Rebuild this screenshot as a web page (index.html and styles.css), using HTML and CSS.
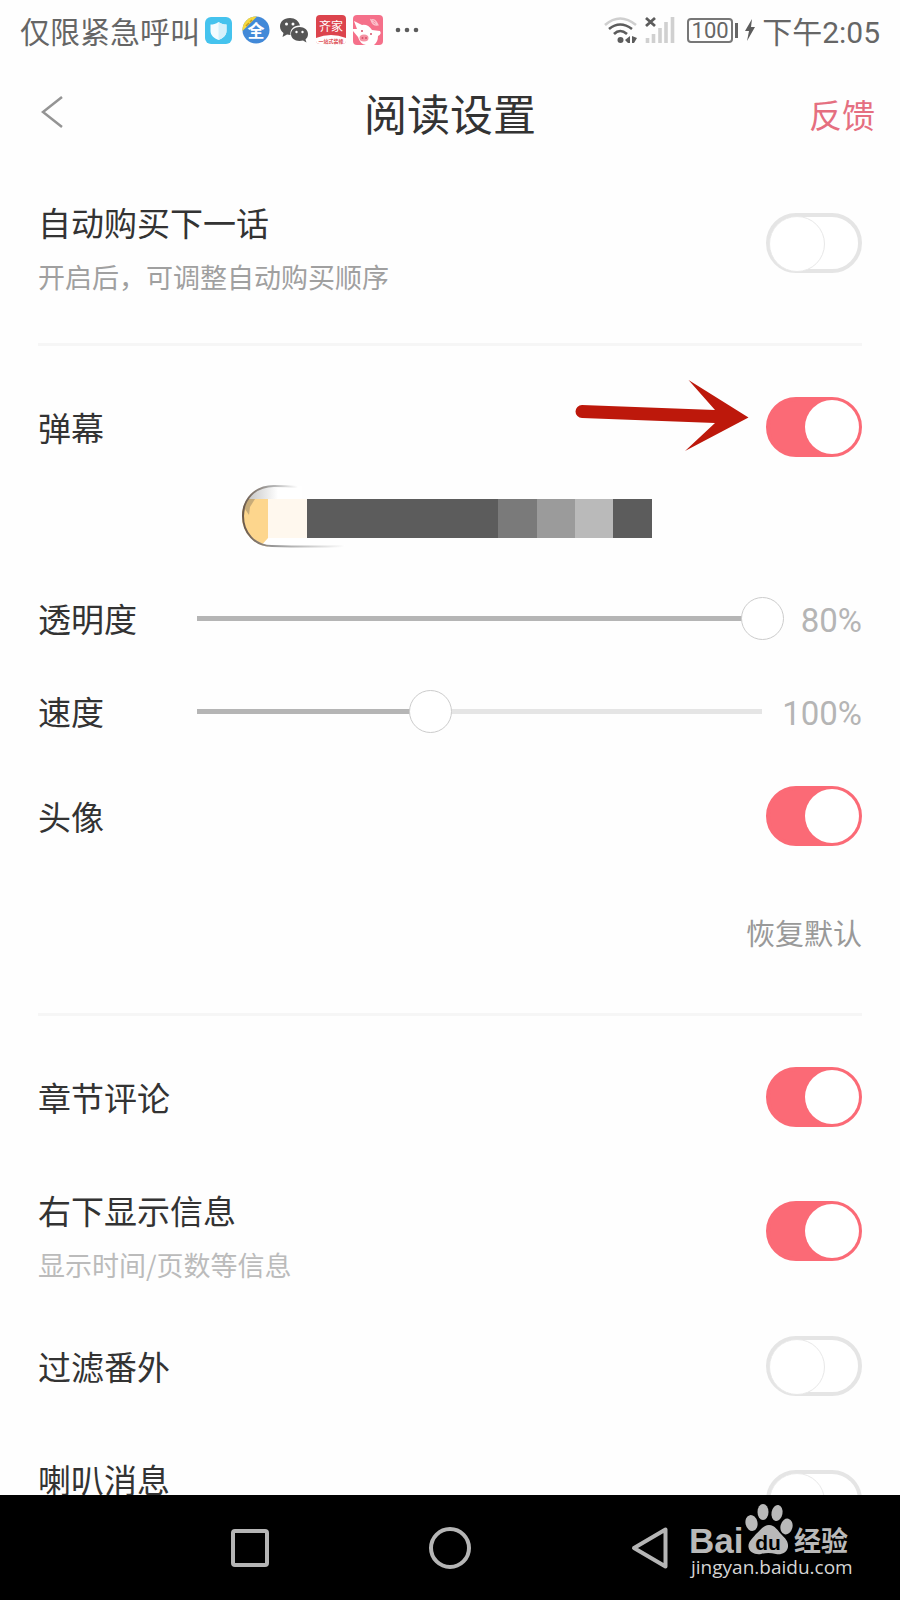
FILE: index.html
```html
<!DOCTYPE html>
<html lang="zh-CN">
<head>
<meta charset="utf-8">
<meta name="viewport" content="width=device-width, initial-scale=1">
<title>阅读设置</title>
<link rel="stylesheet" href="styles.css">
</head>
<body>
<div class="status">
  <div class="status-left">
    <span>仅限紧急呼叫</span>
    <svg class="app-icon" viewBox="0 0 37 37" aria-hidden="true">
      <rect x="5" y="5" width="27" height="27" rx="6" fill="#45c3ee"/>
      <path d="M18.500 10 C16 12 13 12.500 10.500 12.500 V19 C10.500 23.500 14 26 18.500 28 C23 26 26.500 23.500 26.500 19 V12.500 C24 12.500 21 12 18.500 10Z" fill="#f4fcff"/>
      <path d="M18.500 10 C21 12 24 12.500 26.500 12.500 V19 C26.500 23.500 23 26 18.500 28Z" fill="#d5f1fb"/>
    </svg>
    <svg class="app-icon" viewBox="0 0 37 37" aria-hidden="true">
      <circle cx="19" cy="18" r="13.500" fill="#4289d8"/>
      <path d="M5.500 19 A13.500 13.500 0 0 1 20 4.500Z" fill="#f7d83c"/>
      <path d="M9 14 l3 -3 M13 10 l2 -2" stroke="#c09a2a" stroke-width="1.500"/>
      <text class="icon-full" x="19" y="25" text-anchor="middle">全</text>
    </svg>
    <svg class="app-icon" viewBox="0 0 37 37" aria-hidden="true">
      <path d="M16 6 C9.500 6 6 10 6 14.500 C6 17.500 7.500 19.500 9.500 21 L8.500 25 L13 22.500 L16.500 23 C15.500 17 20.500 13 26 13.500 C25 9 21 6 16 6Z" fill="#555"/>
      <path d="M25.500 15 C20.500 15 17 18 17 22 C17 26 20.500 29 25.500 29 L29 28.500 L32.500 30.500 L31.500 27.500 C33 26 34 24.500 34 22 C34 18 30.500 15 25.500 15Z" fill="#555"/>
      <g fill="#fff"><circle cx="12.500" cy="12" r="1.500"/><circle cx="19" cy="12" r="1.500"/><circle cx="22.500" cy="20" r="1.200"/><circle cx="28.500" cy="20" r="1.200"/></g>
    </svg>
    <svg class="app-icon" viewBox="0 0 37 37" aria-hidden="true">
      <rect x="5" y="3" width="30" height="29" rx="4" fill="#dc444d"/>
      <path d="M5 26 Q20 20 35 26 V29 Q35 32 31 32 H9 Q5 32 5 29Z" fill="#fff"/>
      <text class="icon-name" x="20" y="19" text-anchor="middle">齐家</text>
      <text class="icon-tag" x="20" y="31" text-anchor="middle">一站式装修</text>
    </svg>
    <svg class="app-icon" viewBox="0 0 37 37" aria-hidden="true">
      <rect x="5" y="3" width="30" height="30" rx="4" fill="#f5708a"/>
      <path d="M6 9 L14 13 Q20 12 24 18 L32 19 Q34 22 30 24 Q30 30 26 33 H18 Q12 32 10 25 L5 19 V17 L9 17Z" fill="#fff"/>
      <ellipse cx="16" cy="26" rx="4.500" ry="3.500" fill="#f593a4"/>
      <g fill="#d6506a"><circle cx="14.500" cy="26" r="1"/><circle cx="18" cy="26" r="1"/><circle cx="14" cy="19" r="1"/><circle cx="23" cy="22" r="1"/></g>
      <path d="M23 8 Q27 6 30 13 Q25 14 23 8 L30 13" fill="none" stroke="#fbc3cd" stroke-width="1.200"/>
    </svg>
    <svg class="app-icon" viewBox="0 0 37 37" aria-hidden="true">
      <g fill="#5c5c5c"><circle cx="13" cy="18" r="2.300"/><circle cx="22" cy="18" r="2.300"/><circle cx="31" cy="18" r="2.300"/></g>
    </svg>
  </div>
  <div class="status-right">
    <svg class="wifi" viewBox="0 0 34 28" aria-hidden="true">
      <g fill="none" stroke="#5c5c5c" stroke-width="2.600">
        <path d="M1 9 Q16 -4 32 9" stroke="#cfcfcf"/>
        <path d="M5 13 Q16 4 28 13"/>
        <path d="M10 18 Q16 12 23 18"/>
      </g>
      <circle cx="16.500" cy="24" r="3" fill="#5c5c5c"/>
      <path d="M21 24 L26 20 V27 H24Z M28 20 L33 22 L30 27 H28Z" fill="#5c5c5c"/>
    </svg>
    <svg class="signal" viewBox="0 0 30 28" aria-hidden="true">
      <path d="M1 2 L10 10 M10 2 L1 10" stroke="#5c5c5c" stroke-width="2.800"/>
      <path d="M2.500 22 V27 M8.500 18 V27 M15 12 V27 M21 6 V27 M27.500 1 V27" stroke="#d0d0d0" stroke-width="3.600"/>
    </svg>
    <span class="battery">100</span>
    <svg class="bolt" viewBox="0 0 12 24" aria-hidden="true"><path d="M8 1 L1 13 H5 L3 23 L11 9 H7Z" fill="#5c5c5c"/></svg>
    <span class="clock">下午2:05</span>
  </div>
</div>

<header class="header">
  <button class="back" type="button" aria-label="返回">
    <svg viewBox="0 0 22 34" aria-hidden="true"><path d="M21 2 L2 17 L21 32" fill="none" stroke="#949494" stroke-width="2.500"/></svg>
  </button>
  <h1 class="title">阅读设置</h1>
  <a class="feedback" href="#">反馈</a>
</header>

<main class="settings">
  <section class="group group-first">
    <div class="row row-tall">
      <div class="row-text">
        <label class="label" for="auto-buy">自动购买下一话</label>
        <p class="hint">开启后，可调整自动购买顺序</p>
      </div>
      <input class="toggle" type="checkbox" id="auto-buy">
    </div>
  </section>

  <section class="group group-danmu">
    <div class="row">
      <label class="label" for="danmu">弹幕</label>
      <svg class="pointer" viewBox="0 0 180 74" aria-hidden="true">
        <path d="M12 27 L145 32 L118.500 2 L178.500 39.500 L115 73 L145 45 L12 40 A6.500 6.500 0 0 1 12 27Z" fill="#bd180b"/>
      </svg>
      <input class="toggle" type="checkbox" id="danmu" checked>
    </div>
    <svg class="preview" viewBox="0 0 420 63" aria-hidden="true">
      <defs>
        <linearGradient id="rim" x1="0" x2="1"><stop offset="0" stop-color="#6b5a4c"/><stop offset=".3" stop-color="#999"/><stop offset="1" stop-color="#fff"/></linearGradient>
        <linearGradient id="rim-top" x1="0" x2="1"><stop offset="0" stop-color="#6b5a4c"/><stop offset=".5" stop-color="#aaa"/><stop offset="1" stop-color="#fff"/></linearGradient>
        <linearGradient id="shade" x1="0" x2="1"><stop offset="0" stop-color="#bbb"/><stop offset=".6" stop-color="#fff"/></linearGradient>
        <clipPath id="pill"><rect x="2" y="1" width="200" height="61" rx="30"/></clipPath>
      </defs>
      <g clip-path="url(#pill)">
        <rect x="2" y="1" width="60" height="14" fill="url(#shade)"/>
        <path d="M2 14 H28 V62 H18 L2 44Z" fill="#fdd68d"/>
        <path d="M20 62 L28 53 H70 V60Z" fill="#fff"/>
        <path d="M2 14 H15 L10 22 L9 30 L5 24 L3 38Z" fill="#a38d6a" opacity=".6"/>
      </g>
      <path d="M3 31 C3 14 15 1 34 1 Q46 1 58 2" fill="none" stroke="url(#rim-top)" stroke-width="2"/>
      <path d="M3 31 C3 48 15 61 32 61 C50 61.500 75 62 105 61" fill="none" stroke="url(#rim)" stroke-width="2"/>
      <rect x="28" y="14" width="39" height="39" fill="#fff8ee"/>
      <rect x="67" y="14" width="345" height="39" fill="#5c5c5c"/>
      <rect x="258" y="14" width="39" height="39" fill="#7a7a7a"/>
      <rect x="297" y="14" width="38" height="39" fill="#9b9b9b"/>
      <rect x="335" y="14" width="38" height="39" fill="#bababa"/>
    </svg>
    <div class="row row-opacity">
      <label class="label label-slider" for="opacity">透明度</label>
      <input class="slider" type="range" id="opacity" min="0" max="80" value="80" style="--fill: 97%">
      <output class="value" for="opacity">80%</output>
    </div>
    <div class="row row-speed">
      <label class="label label-slider" for="speed">速度</label>
      <input class="slider" type="range" id="speed" min="22" max="222" value="100" style="--fill: 40%">
      <output class="value" for="speed">100%</output>
    </div>
    <div class="row row-avatar">
      <label class="label" for="avatar">头像</label>
      <input class="toggle" type="checkbox" id="avatar" checked>
    </div>
    <button class="reset" type="button">恢复默认</button>
  </section>

  <section class="group group-display">
    <div class="row">
      <label class="label" for="comments">章节评论</label>
      <input class="toggle" type="checkbox" id="comments" checked>
    </div>
    <div class="row row-tall">
      <div class="row-text">
        <label class="label" for="corner">右下显示信息</label>
        <p class="hint hint-light">显示时间/页数等信息</p>
      </div>
      <input class="toggle" type="checkbox" id="corner" checked>
    </div>
    <div class="row row-filter">
      <label class="label" for="extras">过滤番外</label>
      <input class="toggle" type="checkbox" id="extras">
    </div>
    <div class="row row-tall">
      <label class="label" for="horn">喇叭消息</label>
      <input class="toggle" type="checkbox" id="horn">
    </div>
  </section>
</main>

<nav class="navbar">
  <button class="nav-button" type="button" aria-label="最近任务">
    <svg viewBox="0 0 44 44" aria-hidden="true"><rect x="5" y="5" width="34" height="34" rx="2" fill="none" stroke="#b5b5b5" stroke-width="4"/></svg>
  </button>
  <button class="nav-button" type="button" aria-label="主页">
    <svg viewBox="0 0 44 44" aria-hidden="true"><circle cx="22" cy="22" r="19" fill="none" stroke="#b5b5b5" stroke-width="4"/></svg>
  </button>
  <button class="nav-button" type="button" aria-label="返回">
    <svg viewBox="0 0 44 44" aria-hidden="true"><path d="M37.500 3.500 V40.500 L6 22Z" fill="none" stroke="#b5b5b5" stroke-width="4" stroke-linejoin="round"/></svg>
  </button>
  <svg class="brand" viewBox="0 0 170 80" role="img" aria-label="Baidu 经验 jingyan.baidu.com">
    <g fill="#b9b9b9">
      <text class="brand-bai" x="0" y="51">Bai</text>
      <ellipse cx="62.500" cy="21" rx="6" ry="8" transform="rotate(-12 62.500 21)"/>
      <ellipse cx="74" cy="10" rx="5.500" ry="8"/>
      <ellipse cx="88" cy="11" rx="5.500" ry="8" transform="rotate(10 88 11)"/>
      <ellipse cx="97.500" cy="24.500" rx="6" ry="8" transform="rotate(14 97.500 24.500)"/>
      <path d="M80 23 C86 23 89 29 92 32 C97 37 99.500 40 99 45 C98 51 92 53 87 52 Q79 50 72 52 C66 53 60 50 59.500 45 C59 40 63 37 67 32 C71 29 74 23 80 23Z"/>
      <text class="brand-jy" x="105" y="49">经验</text>
    </g>
    <text class="brand-du" x="79" y="48" text-anchor="middle">du</text>
    <text class="brand-url" x="2" y="72">jingyan.baidu.com</text>
  </svg>
</nav>
</body>
</html>
```

FILE: styles.css
```css
* { box-sizing: border-box; }

body {
  margin: 0;
  height: 100vh;
  display: flex;
  flex-direction: column;
  overflow: hidden;
  background: #fefefe;
  color: #333;
  font-family: Roboto, "Noto Sans CJK SC", sans-serif;
}

button { padding: 0; border: 0; background: none; font: inherit; }
svg { display: block; }

.title, .label, .hint, .reset { font-family: "Noto Sans CJK SC", sans-serif; }

.status {
  flex: none;
  height: 60px;
  padding: 0 20px;
  display: flex;
  align-items: center;
  justify-content: space-between;
  font-size: 30px;
  color: #666;
}
.status-left, .status-right { display: flex; align-items: center; }
.app-icon { width: 37px; height: 37px; }
.icon-full { font-size: 17px; font-weight: 700; fill: #fff; }
.icon-name { font-size: 12px; fill: #fff; }
.icon-tag { font-size: 5px; font-weight: 700; fill: #dc444d; }
.wifi { width: 34px; height: 28px; margin-right: 7px; }
.signal { width: 30px; height: 28px; margin-right: 12px; }
.battery {
  position: relative;
  width: 46px;
  height: 25px;
  margin-right: 11px;
  border: 2px solid #777;
  border-radius: 4px;
  font-size: 22px;
  line-height: 22px;
  text-align: center;
}
.battery::after {
  content: "";
  position: absolute;
  top: 3px;
  right: -7px;
  width: 3px;
  height: 15px;
  background: #666;
}
.bolt { width: 12px; height: 24px; margin-right: 6px; }

.header {
  flex: none;
  height: 108px;
  padding: 0 25px 0 41px;
  display: grid;
  grid-template-columns: 1fr auto 1fr;
  align-items: center;
}
.back { justify-self: start; }
.back svg { width: 22px; height: 34px; margin-bottom: 4px; }
.title { margin: 0; padding: 0 16px 4px 0; font-size: 43px; font-weight: 400; line-height: 60px; }
.feedback { justify-self: end; font-size: 33px; color: #e56f80; text-decoration: none; }

.settings { flex: 1; min-height: 0; overflow: hidden; padding: 0 38px; }
.group + .group { border-top: 3px solid #f6f6f6; }
.group-first { padding: 32px 0 48px; }
.group-danmu { padding: 51px 0 61px; display: flex; flex-direction: column; }
.group-display { padding-top: 51px; }

.row {
  position: relative;
  min-height: 60px;
  display: flex;
  align-items: center;
  justify-content: space-between;
}
.row-tall { align-items: flex-start; }
.row-tall .toggle { margin-top: 13px; }
.row + .row-tall { margin-top: 61px; }
.row-text { display: flex; flex-direction: column; gap: 15px; }
.label { font-size: 33px; line-height: 44px; }
.hint { margin: 0; font-size: 27px; line-height: 36px; color: #a0a0a0; }
.hint-light { color: #bbb; }
.preview { align-self: center; width: 420px; height: 63px; margin-top: 28px; }
.row-opacity { margin-top: 40px; }
.row-speed { margin-top: 33px; }
.row-avatar { margin-top: 45px; }
.row-filter { margin-top: 53px; }
.reset { align-self: flex-end; margin-top: 66px; font-size: 29px; line-height: 40px; color: #999; }

.toggle {
  appearance: none;
  flex: none;
  position: relative;
  width: 96px;
  height: 60px;
  margin: 0;
  border: 4px solid #e5e5e5;
  border-radius: 30px;
  background: #fff;
}
.toggle::before {
  content: "";
  position: absolute;
  top: -1px;
  left: -1px;
  width: 54px;
  height: 54px;
  border-radius: 50%;
  background: #fff;
  border: 1px solid #e8e8e8;
}
.toggle:checked { border-color: #fb6a76; background: #fb6a76; }
.toggle:checked::before { left: 35px; border: 0; }

.pointer { position: absolute; top: -19px; right: 112px; width: 180px; height: 74px; }

.label-slider { width: 159px; }
.slider {
  appearance: none;
  flex: 1;
  min-width: 0;
  height: 44px;
  margin: 0;
  background:
    linear-gradient(#b5b5b5, #b5b5b5) left center / var(--fill) 5px no-repeat,
    linear-gradient(#e5e5e5, #e5e5e5) left center / calc(100% - 22px) 5px no-repeat;
}
.slider::-webkit-slider-thumb {
  appearance: none;
  width: 43px;
  height: 43px;
  border: 1px solid #ccc;
  border-radius: 50%;
  background: #fff;
}
.value {
  width: 78px;
  padding-top: 4px;
  display: flex;
  justify-content: flex-end;
  font-size: 33px;
  color: #b5b5b5;
}

.navbar {
  flex: none;
  position: relative;
  height: 105px;
  display: flex;
  align-items: center;
  justify-content: center;
  gap: 156px;
  background: #000;
}
.nav-button svg { width: 44px; height: 44px; }
.brand { position: absolute; top: 7px; right: 41px; width: 170px; height: 80px; }
.brand-bai { font: 700 35px "Liberation Sans", sans-serif; }
.brand-du { font: 700 21px "Liberation Sans", sans-serif; fill: #000; }
.brand-jy { font: 700 27px "Noto Sans CJK SC", sans-serif; }
.brand-url { font: 400 19px "Open Sans", sans-serif; fill: #d5d5d5; }
```
